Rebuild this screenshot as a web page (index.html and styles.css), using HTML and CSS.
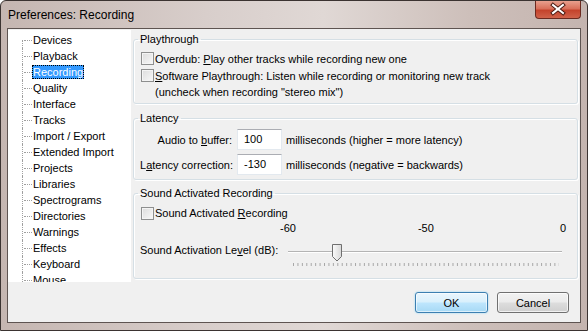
FILE: index.html
```html
<!DOCTYPE html>
<html lang="en">
<head>
    <meta charset="UTF-8">
    <title>Preferences: Recording</title>
    <link rel="stylesheet" href="styles.css">
</head>
<body>
<div class="window">
    <div class="titlebar">
        <span class="title">Preferences: Recording</span>
        <div class="close">
            <svg width="46" height="18" viewBox="0 0 46 18">
                <path d="M18 5 L28 13 M28 5 L18 13" stroke="#4a1a12" stroke-width="4" stroke-linecap="square"/>
                <path d="M18 5 L28 13 M28 5 L18 13" stroke="#fff" stroke-width="2" stroke-linecap="square"/>
            </svg>
        </div>
    </div>
    <div class="client">
        <div class="main">
            <ul class="tree">
                <li><span>Devices</span></li>
                <li><span>Playback</span></li>
                <li><span class="selected">Recording</span></li>
                <li><span>Quality</span></li>
                <li><span>Interface</span></li>
                <li><span>Tracks</span></li>
                <li><span>Import / Export</span></li>
                <li><span>Extended Import</span></li>
                <li><span>Projects</span></li>
                <li><span>Libraries</span></li>
                <li><span>Spectrograms</span></li>
                <li><span>Directories</span></li>
                <li><span>Warnings</span></li>
                <li><span>Effects</span></li>
                <li><span>Keyboard</span></li>
                <li><span>Mouse</span></li>
            </ul>

            <div class="panel">
                <fieldset class="group playthrough">
                    <legend>Playthrough</legend>
                    <div class="check"><span class="cb"></span><span>Overdub: <u>P</u>lay other tracks while recording new one</span></div>
                    <div class="check"><span class="cb"></span><span><u>S</u>oftware Playthrough: Listen while recording or monitoring new track</span></div>
                    <div class="note">(uncheck when recording "stereo mix")</div>
                </fieldset>

                <fieldset class="group latency">
                    <legend>Latency</legend>
                    <div class="field">
                        <label>Audio to <u>b</u>uffer:</label>
                        <span class="input">100</span>
                        <span class="unit">milliseconds (higher = more latency)</span>
                    </div>
                    <div class="field">
                        <label>L<u>a</u>tency correction:</label>
                        <span class="input">-130</span>
                        <span class="unit">milliseconds (negative = backwards)</span>
                    </div>
                </fieldset>

                <fieldset class="group sound">
                    <legend>Sound Activated Recording</legend>
                    <div class="check"><span class="cb"></span><span>Sound Activated <u>R</u>ecording</span></div>
                    <div class="scale">
                        <span>-60</span>
                        <span class="mid">-50</span>
                        <span class="end">0</span>
                    </div>
                    <div class="slider-row">
                        <span class="slider-label">Sound Activation Le<u>v</u>el (dB):</span>
                        <svg class="slider" width="280" height="30" viewBox="0 0 280 30">
                            <defs>
                                <linearGradient id="thumb" x1="0" y1="0" x2="1" y2="0">
                                    <stop offset="0" stop-color="#fbfbfb"/>
                                    <stop offset="1" stop-color="#d8d8d8"/>
                                </linearGradient>
                            </defs>
                            <line x1="2" y1="11.5" x2="276" y2="11.5" stroke="#b4b4b4"/>
                            <line x1="2" y1="12.5" x2="276" y2="12.5" stroke="#ffffff"/>
                            <line x1="7" y1="24.5" x2="273" y2="24.5" stroke="#a8a8a8" stroke-width="3" stroke-dasharray="1 3.43"/>
                            <path d="M46.5 4.5 h9 v12 l-4.5 4.5 l-4.5 -4.5 z" fill="url(#thumb)" stroke="#6f6f6f"/>
                        </svg>
                    </div>
                </fieldset>
            </div>
        </div>

        <div class="footer">
            <button class="btn default">OK</button>
            <button class="btn">Cancel</button>
        </div>
    </div>
</div>
</body>
</html>
```

FILE: styles.css
```css
body {
    margin: 0;
    padding: 0;
    font-family: "Liberation Sans", Arial, sans-serif;
    font-size: 11px;
    color: #000;
    background: #fff;
}

/* window frame */
.window {
    width: 588px;
    height: 331px;
    box-sizing: border-box;
    border: 1px solid #3b3331;
    border-radius: 6px 6px 0 0;
    padding: 0 6px 7px;
    display: flex;
    flex-direction: column;
    background: linear-gradient(to right, #c5b6b1 0%, #d8cecb 35%, #e0d8d5 55%, #cdbfba 80%, #c4b4af 100%);
    overflow: hidden;
}
.titlebar {
    height: 27px;
    display: flex;
    align-items: flex-start;
    margin: 0 -6px;
    padding: 0 6px 0 7px;
}
.title {
    font-size: 12px;
    line-height: 14px;
    margin-top: 7px;
    color: #000;
}
.close {
    margin-left: auto;
    width: 46px;
    height: 18px;
    box-sizing: border-box;
    border: 1px solid #6b2a20;
    border-top: none;
    border-radius: 0 0 4px 4px;
    background: linear-gradient(#e8a08e 0%, #d8705a 45%, #c4432c 55%, #d0624a 100%);
}
.close svg {
    display: block;
    margin: -1px 0 0 -1px;
}
.client {
    flex: 1;
    border: 1px solid #5e5451;
    background: #f0f0f0;
    display: flex;
    flex-direction: column;
}
.main {
    display: flex;
    height: 253px;
}

/* tree */
.tree {
    width: 123px;
    height: 252px;
    margin: 1px 0 0;
    padding: 2px 0 0;
    box-sizing: border-box;
    list-style: none;
    background: #fff;
    overflow: hidden;
}
.tree li {
    position: relative;
    height: 16px;
    line-height: 16px;
    padding-left: 24px;
    white-space: nowrap;
}
.tree li::before {
    content: "";
    position: absolute;
    left: 14px;
    top: 0;
    bottom: 0;
    border-left: 1px dotted #a0a0a0;
}
.tree li:first-child::before {
    top: 8px;
}
.tree li::after {
    content: "";
    position: absolute;
    left: 16px;
    width: 8px;
    top: 8px;
    border-top: 1px dotted #a0a0a0;
}
.tree span {
    padding: 1px 1px;
}
.tree .selected {
    background: #3399ff;
    color: #fff;
    outline: 1px dotted #000;
    outline-offset: -1px;
}

/* right side */
.panel {
    width: 445px;
    margin-left: 2px;
    padding-top: 3px;
}
.group {
    margin: 0;
    padding: 0 6px;
    border: 1px solid #d5dfe5;
    border-radius: 3px;
    box-shadow: 1px 1px 0 #fff, inset 1px 1px 0 #fff;
}
.group legend {
    padding: 0 2px;
    margin-left: -2px;
    line-height: 14px;
}
.playthrough {
    padding-top: 4px;
    padding-bottom: 3px;
}
.latency {
    margin-top: 7px;
    padding-top: 4px;
    padding-bottom: 4px;
}
.sound {
    margin-top: 6px;
    padding-top: 5px;
    padding-bottom: 8px;
}
.check {
    display: flex;
    align-items: center;
    height: 17px;
    white-space: nowrap;
}
.sound .check {
    height: 16px;
}
.cb {
    width: 13px;
    height: 13px;
    box-sizing: border-box;
    margin: 0 1px 0 1px;
    border: 1px solid #8e8f8f;
    background: linear-gradient(135deg, #dcdcdc, #f8f8f8);
    box-shadow: inset 0 0 0 1px #f4f4f4;
}
.note {
    height: 16px;
    line-height: 16px;
    padding-left: 15px;
}

.field {
    display: flex;
    align-items: center;
    height: 21px;
}
.field + .field {
    margin-top: 4px;
}
.field label {
    width: 92px;
    text-align: right;
    white-space: nowrap;
}
.input {
    width: 45px;
    height: 21px;
    box-sizing: border-box;
    margin-left: 5px;
    padding-left: 6px;
    line-height: 19px;
    background: #fff;
    border: 1px solid #e3e9ef;
    border-top-color: #abadb3;
}
.unit {
    margin-left: 4px;
    white-space: nowrap;
}

.scale {
    display: flex;
    height: 14px;
    line-height: 14px;
    padding-left: 140px;
}
.scale .mid {
    margin-left: 122px;
}
.scale .end {
    margin-left: auto;
    margin-right: 5px;
}
.slider-row {
    display: flex;
    align-items: flex-start;
    margin-top: 5px;
    height: 30px;
}
.slider-label {
    margin-top: 3px;
    line-height: 14px;
    white-space: nowrap;
}
.slider {
    display: block;
    margin-left: auto;
    margin-right: 5px;
}

/* buttons */
.footer {
    display: flex;
    justify-content: flex-end;
    gap: 9px;
    padding: 10px 11px 0 0;
}
.btn {
    width: 72px;
    height: 21px;
    padding: 0;
    font: inherit;
    color: #000;
    border: 1px solid #707070;
    border-radius: 3px;
    background: linear-gradient(#f2f2f2 0%, #ebebeb 48%, #dddddd 52%, #cfcfcf 100%);
    box-shadow: inset 0 0 0 1px rgba(255, 255, 255, 0.7);
}
.btn.default {
    width: 73px;
    border-color: #3c7fb1;
    background: linear-gradient(#eaf6fd 0%, #d9f0fc 48%, #bee6fd 52%, #a7d9f5 100%);
    box-shadow: inset 0 0 0 1px rgba(255, 255, 255, 0.6), 0 0 2px #8ad6f7;
}
```
